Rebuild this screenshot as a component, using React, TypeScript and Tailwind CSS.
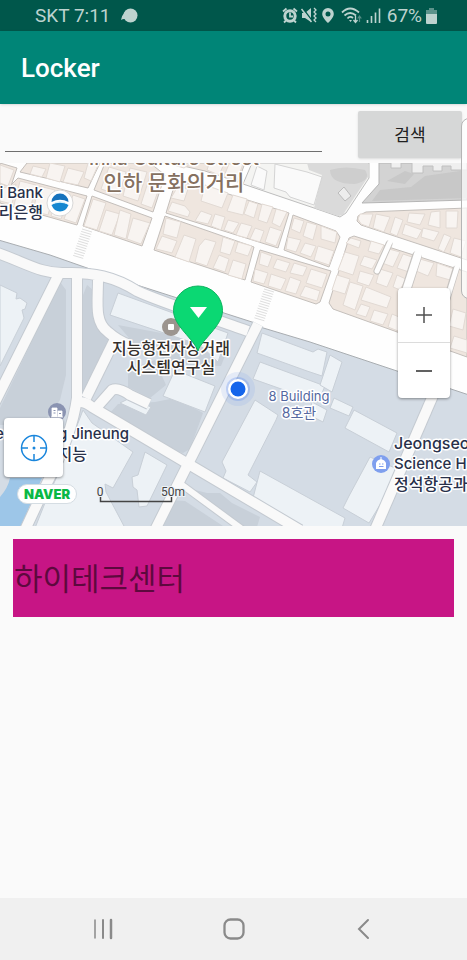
import type { ReactNode } from "react";

type Shape = string;

const cityBlocks: Shape[] = [
  "0,163 17,168 9,192 0,190",
  "27,163 20,172 88,188 100,163",
  "105,163 94,190 153,212 165,175 150,163",
  "18,178 87,196 77,225 0,203 0,184 10,186",
  "92,196 83,226 142,246 152,218",
  "176,180 222,192 289,213 278,248 166,213 173,190",
  "165,216 154,250 245,280 254,247",
  "170,163 245,163 238,182 205,171",
  "293,215 284,250 329,267 340,237 336,231",
  "260,250 251,282 316,304 320,302 331,271",
  "366,212 467,208 467,260 361,225 357,221 358,216",
  "354,236 467,272 467,357 333,309 329,303 349,238",
];

const houses: Shape[] = [
  "0,165 14,170 8,186 0,183",
  "33,166 46,169 42,177 30,174",
  "50,163 65,166 60,182 46,178",
  "68,168 84,172 78,185 63,182",
  "88,163 99,163 91,181 84,178",
  "109,167 126,172 119,195 101,189",
  "130,168 147,172 138,201 123,196",
  "150,176 162,180 152,208 141,204",
  "0,189 16,184 12,204 0,201",
  "20,181 36,185 30,210 14,205",
  "39,186 55,190 48,215 33,211",
  "58,191 70,194 61,219 51,216",
  "73,195 85,199 76,223 64,219",
  "93,199 106,203 97,230 84,226",
  "106,210 120,214 112,235 99,231",
  "120,210 131,214 126,239 114,235",
  "133,218 150,223 141,244 127,239",
  "178,186 188,189 184,201 171,198",
  "172,202 185,206 190,212 188,217 168,211",
  "205,185 228,193 222,208 201,201",
  "233,195 247,199 243,215 227,211",
  "249,201 258,204 254,218 244,214",
  "262,204 273,207 267,223 258,220",
  "276,209 287,212 280,227 272,223",
  "201,211 212,215 208,224 195,221",
  "215,214 225,217 221,230 211,226",
  "228,220 239,223 233,233 224,230",
  "241,223 252,226 247,238 236,235",
  "255,228 264,231 260,242 250,239",
  "270,227 282,231 276,246 265,242",
  "166,218 181,222 177,238 163,234",
  "162,236 177,241 172,253 156,249",
  "184,235 196,239 189,262 175,257",
  "205,239 216,242 207,266 195,262 199,246",
  "223,237 235,241 230,255 220,252",
  "238,242 252,246 248,256 235,252",
  "219,255 229,259 225,272 213,268",
  "233,260 246,264 242,279 228,275",
  "173,164 190,164 184,168 177,166",
  "209,164 224,164 219,175 207,170",
  "229,164 243,164 237,180 224,176",
  "294,218 304,221 300,233 291,229",
  "307,222 317,225 313,240 303,236",
  "321,226 337,232 335,243 321,239",
  "288,237 301,240 296,252 286,249",
  "305,243 316,246 311,257 300,253",
  "318,246 334,251 329,265 314,260",
  "261,252 272,256 268,267 259,264",
  "277,259 290,263 286,272 273,268",
  "294,263 307,267 303,276 290,273",
  "255,269 268,273 264,284 253,281",
  "271,274 286,279 281,290 268,286",
  "290,277 301,281 296,294 285,291",
  "311,269 327,274 322,288 306,283",
  "305,286 320,291 317,301 300,296",
  "360,214 373,214 369,227 361,224 358,219",
  "376,214 390,217 384,232 373,228",
  "395,217 403,220 397,236 390,233",
  "409,213 425,214 420,225 407,222",
  "405,224 422,230 417,239 402,234",
  "423,228 439,232 434,241 421,237",
  "431,212 440,211 440,228 428,225",
  "446,211 458,211 457,228 446,228",
  "444,234 451,237 444,252 438,249",
  "454,238 466,241 461,257 450,253",
  "351,238 361,241 359,248 346,243",
  "345,252 359,256 353,275 338,270",
  "371,241 384,245 379,254 368,251",
  "364,256 377,260 372,269 360,265",
  "389,249 400,252 393,267 382,263",
  "403,254 415,258 409,272 397,268",
  "420,259 434,263 428,276 416,271",
  "437,263 454,269 450,280 436,276",
  "380,269 393,273 387,287 376,283",
  "360,271 374,275 369,286 357,282",
  "397,275 406,279 400,290 393,287",
  "337,275 350,279 345,294 332,290",
  "350,282 363,286 355,310 343,305",
  "366,287 391,297 387,308 361,300",
  "361,304 370,307 366,317 356,314",
  "374,310 388,314 383,325 370,321",
  "392,314 404,319 398,331 388,327",
  "453,309 466,313 463,330 449,326",
  "454,336 467,340 467,353 450,348",
];

const campusRoads: Shape[] = [
  "M-8 251C25 262 40 274 65 273C93 272 115 277 137 291C160 302 220 321 248 331",
  "M59 274L-6 404",
  "M77 278V398Q72 435 47 483L24 532",
  "M98 280C98 302 94 322 108 332Q118 341 130 345",
  "M116 337L86 398",
  "M96 408L112 390Q118 387 130 395L149 404",
  "M80 402Q86 402 92 407L300 530",
  "M258 324L154 532",
  "M438 384L374 532",
];

const grounds: Shape[] = [
  "60,282 66,290 66,375 60,400 42,425 0,425 0,408",
  "87,285 93,290 96,320 109,338 83,392 81,300",
  "118,325 210,342 228,348 221,366 178,365 135,345",
  "128,370 155,360 166,385 150,398 128,387",
  "110,413 118,404 155,402 175,398 203,413 190,449 183,453 172,450",
  "170,500 185,501 226,528 158,528",
  "190,487 195,490 207,493 220,493 232,503 260,517 257,527 242,526",
];

const campusBuildings: Shape[] = [
  "0,285 17,293 16,299 20,298 27,303 25,309 22,310 24,318 0,366",
  "118,293 228,333 218,362 200,345 110,315",
  "175,370 215,386 205,412 163,396",
  "120,403 130,398 151,407 146,415",
  "262,333 313,352 318,349 327,352 322,376 307,371 257,353",
  "260,362 325,386 318,402 253,379",
  "330,355 342,362 332,392 320,385",
  "255,400 278,415 276,420 248,475 257,482 250,492 223,478 226,471 222,462",
  "260,471 345,518 342,528 304,528 253,498",
  "354,410 397,433 389,452 345,428",
  "370,457 395,468 395,480 369,523 343,508 349,496",
  "334,398 353,407 349,416 330,408",
  "312,402 327,410 323,422 309,415",
  "83,410 92,423 133,452 113,488 105,484 106,492 125,528 35,528 47,498 60,470",
  "145,452 167,465 147,506 139,507 137,490 133,487 132,477 138,475",
];

function Polygons({ items, ...rest }: { items: Shape[]; fill: string; stroke: string }) {
  return (
    <g {...rest}>
      {items.map((points) => (
        <polygon key={points} points={points} />
      ))}
    </g>
  );
}

function Crosswalk({ x, y, count }: { x: number; y: number; count: number }) {
  return (
    <g stroke="#dedede" strokeWidth="1">
      {Array.from({ length: count }, (_, i) => (
        <line key={i} x1={x - i * 0.8} y1={y + i * 2.4} x2={x + 10 - i * 0.8} y2={y + 3 + i * 2.4} />
      ))}
    </g>
  );
}

function MapDrawing() {
  return (
    <svg className="absolute inset-0 h-full w-full" viewBox="0 163 467 363" preserveAspectRatio="xMidYMid slice" role="img" aria-label="Map">
      <rect x="-500" y="0" width="1500" height="700" fill="#fefefe" />
      <Polygons items={cityBlocks} fill="#efe6df" stroke="#c4bfbb" />
      <Polygons items={houses} fill="#f8f4f1" stroke="#e2dad4" />

      <path d="M252 163L243 184L314 208L340 217L346 213L369 178V163Z" fill="#f4f4f2" stroke="#bdbdbd" />
      <path d="M322 175L314 208L338 216L343 215L346 210L368 177V163H307L309 170Z" fill="#dadada" />
      <path d="M257 166L267 171L264 190L251 185ZM275 164L307 172L322 177L314 205L290 197L286 192L274 188Z" fill="#fafafa" stroke="#d4d4d4" />
      <path d="M330 170Q345 165 365 170Q372 180 355 184Q330 184 330 170Z" fill="#cecece" />
      <path d="M338 193L344 187L351 196L345 201Z" fill="#ededed" stroke="#bbb" />
      <path d="M379 163V184L362 203L400 202L467 200V163Z" fill="#d3d3d3" stroke="#b5b5b5" />
      <path d="M387 181L405 171L414 174L405 184ZM411 187L425 176L467 170V198L372 201L380 190Z" fill="#c8c8c8" />
      <path d="M391 163V168H401V163M412 163V173H423V166H433V171H442V166H451V170H467V163" fill="#efefef" stroke="#c0c0c0" />

      <g fill="none" stroke="#c6c3c0" strokeLinecap="round">
        <path d="M389 244L377 271" strokeWidth="7" />
        <path d="M417 256L403 300" strokeWidth="10" />
        <path d="M456 269L436 335" strokeWidth="7" />
      </g>
      <g fill="none" stroke="#fefefe" strokeLinecap="round">
        <path d="M390 242L377 271" strokeWidth="5" />
        <path d="M418 254L403 300" strokeWidth="8" />
        <path d="M457 267L436 335" strokeWidth="5" />
      </g>

      <path d="M-5 239L50 255L90 269L140 286L252 322L260 327L310 342L397 371L475 397V540H-5Z" fill="#d4dce5" stroke="#a9adb1" />
      <Polygons items={grounds} fill="#c8d0d9" stroke="none" />
      <Polygons items={campusBuildings} fill="#edf2f6" stroke="#c8cfd7" />
      <path d="M0 497Q8 488 10 478H42L20 528H0Z" fill="#9dc6e8" />
      <g fill="none" stroke="#c4cad1" strokeWidth="12" strokeLinejoin="round">
        {campusRoads.map((d) => (
          <path key={d} d={d} />
        ))}
        <path d="M178 482L246 532" strokeWidth="8" />
      </g>
      <g fill="none" stroke="#f9f9f9" strokeWidth="10" strokeLinejoin="round">
        {campusRoads.map((d) => (
          <path key={d} d={d} />
        ))}
        <path d="M178 482L246 532" strokeWidth="6" />
      </g>
      <Crosswalk x={82} y={229} count={12} />
      <Crosswalk x={264} y={289} count={13} />

      <circle cx="60" cy="203" r="13" fill="#fff" stroke="#d8d8d8" />
      <path d="M51.500 202A8.500 8.500 0 0 1 68.500 202Q60 197.500 51.500 202Z" fill="#1673bd" />
      <path d="M51.500 205Q60 199 68.500 205Q66 211.500 60 211.500T51.500 205Z" fill="#1587d0" />
      <path d="M51.500 204.500Q60 197.500 68.500 204.500Q60 201 51.500 204.500Z" fill="#d6f1fc" />

      <circle cx="171" cy="327" r="9" fill="#9c958f" />
      <rect x="168" y="324" width="6" height="6" rx="1" fill="#fff" />

      <circle cx="57" cy="412" r="9" fill="#8a93b1" />
      <path d="M52 417V408H57V417M58 417V411H62V417M51 417H63" fill="#fff" stroke="#fff" strokeWidth="0.800" />
      <path d="M53.500 410.500H55.500M53.500 413H55.500M59 413.500H61" stroke="#8a93b1" strokeWidth="1" />

      <circle cx="381" cy="464" r="9" fill="#7f9fee" />
      <path d="M376 469V463Q377 460 381 459Q385 460 386 463V469ZM380.500 457H381.500V460H380.500Z" fill="#fff" />
      <path d="M379 464H380.500M382 464H383.500M379 466.500H383.500" stroke="#7f9fee" />

      <g
        fontFamily="Inter, 'Noto Sans CJK KR', sans-serif"
        fontSize="16"
        fontWeight="500"
        fill="#28304a"
        stroke="#fff"
        strokeWidth="3"
        strokeLinejoin="round"
        paintOrder="stroke"
      >
        <g textAnchor="middle" fill="#85705f">
          <text x="174" y="165" fontSize="19">Inha Culture Street</text>
          <text x="174" y="190" fontSize="21">인하 문화의거리</text>
        </g>
        <g textAnchor="end">
          <text x="43" y="198" fontSize="15">i Bank</text>
          <text x="43" y="218">리은행</text>
          <text x="129" y="439" fontSize="15">g Jineung</text>
          <text x="87" y="460">지능</text>
        </g>
        <text x="-5" y="439" fontSize="15">e</text>
        <g textAnchor="middle" fill="#35302c">
          <text x="171" y="354">지능형전자상거래</text>
          <text x="171" y="373">시스템연구실</text>
        </g>
        <g textAnchor="middle" fill="#5468a0" fontWeight="400" fontSize="14">
          <text x="299" y="401" fontSize="13">8 Building</text>
          <text x="299" y="418">8호관</text>
        </g>
        <text x="394" y="449" fontSize="16">Jeongseo</text>
        <text x="394" y="469" fontSize="15">Science H</text>
        <text x="394" y="490">정석항공과</text>
      </g>

      <circle cx="238" cy="389" r="17" fill="#5d8bf0" opacity="0.120" />
      <circle cx="238" cy="389" r="12" fill="#5d8bf0" opacity="0.300" />
      <circle cx="238" cy="389" r="10" fill="#fff" />
      <circle cx="238" cy="389" r="7.500" fill="#1565eb" />

      <path d="M198 351C194 339 173.500 326 173.500 310.500A24.500 24.500 0 0 1 222.500 310.500C222.500 326 202 339 198 351Z" fill="#0bd873" stroke="#0bb45f" />
      <path d="M190 307H207L198.500 318Z" fill="#fff" />

      <g fontFamily="Roboto, sans-serif" fontSize="12" fill="#444" textAnchor="middle" stroke="#edf2f6" strokeWidth="2" paintOrder="stroke">
        <text x="100" y="496">0</text>
        <text x="173" y="496">50m</text>
      </g>
      <path d="M100.500 497V501.500H171.500V497" fill="none" stroke="#444" strokeWidth="1.500" />
    </svg>
  );
}

function StatusIcons() {
  return (
    <svg width="102" height="20" viewBox="280 6 102 20" fill="none" stroke="#bdd3cf" aria-hidden="true">
      <circle cx="289" cy="16" r="5.200" strokeWidth="3" />
      <path d="M289 12.500V16.500H292M282 11.500L285.500 8.500M296 11.500L292.500 8.500M285 20.500L283 22.500M293 20.500L295 22.500" strokeWidth="1.800" />
      <path d="M301 13H304L310 8V22L304 18H301Z" fill="#bdd3cf" stroke="none" />
      <path d="M301.500 8L312 22" stroke="#00574b" strokeWidth="1.500" />
      <path d="M300.500 9L310.500 22" strokeWidth="1.500" />
      <path d="M313 8L315 10L313 12L315 14L313 16L315 18L313 20L315 22" strokeWidth="1.300" />
      <path d="M327 8A5.800 5.800 0 0 0 321.200 14C321.200 18 327 23 327 23S332.800 18 332.800 14A5.800 5.800 0 0 0 327 8ZM327 11.500A2.500 2.500 0 1 1 327 16.500A2.500 2.500 0 1 1 327 11.500Z" fill="#bdd3cf" stroke="none" fillRule="evenodd" />
      <path d="M341 12.500Q349 4.500 358 12.500M343.500 15.500Q349 10.500 355 15.500M346.500 18.500Q349 15.500 352 18" strokeWidth="1.800" />
      <path d="M348 20H351L349.500 22Z" fill="#bdd3cf" stroke="none" />
      <path d="M354.500 16V22M352.500 20L354.500 22.500L356.500 20" strokeWidth="1.300" />
      <path d="M358.500 22V16M356.700 18.500L358.500 16L360.300 18.500" strokeWidth="1.200" opacity="0.450" />
      <path d="M366.500 20V23M370.500 16V23M374.500 12.500V23M378.500 8.500V23" strokeWidth="1.600" />
    </svg>
  );
}

function NavButton({ label, children }: { label: string; children: ReactNode }) {
  return (
    <button type="button" aria-label={label} className="flex h-12 w-12 items-center justify-center">
      <svg width="24" height="24" viewBox="0 0 24 24" fill="none" stroke="#8a8a8a" strokeWidth="2" strokeLinecap="round" aria-hidden="true">
        {children}
      </svg>
    </button>
  );
}

export default function App() {
  return (
    <div className="relative flex min-h-screen flex-col overflow-hidden bg-[#fafafa] font-[Roboto,'Noto_Sans_CJK_KR',sans-serif]">
      <div className="flex h-[31px] items-center bg-[#00574b] pr-[30px] pl-[35px] text-[19px] leading-6 text-[#bdd3cf]">
        <span>SKT 7:11</span>
        <svg className="ml-2.5" width="17" height="16" viewBox="0 0 17 16" fill="#bdd3cf" aria-hidden="true">
          <circle cx="9.500" cy="7.500" r="7" />
          <path d="M4 4Q1 7 0 12Q3 10 6 12Z" />
        </svg>
        <div className="ml-auto flex items-center gap-1">
          <StatusIcons />
          <span>67%</span>
          <svg width="11" height="16" viewBox="0 0 11 16" aria-hidden="true">
            <path d="M3 0H8V2H11V6H0V2H3Z" fill="#5c938b" />
            <path d="M0 6H11V15Q11 16 10 16H1Q0 16 0 15Z" fill="#bdd3cf" />
          </svg>
        </div>
      </div>

      <header className="z-10 flex h-[73px] items-center bg-[#008577] px-[21px] shadow-sm">
        <h1 className="text-[26px] leading-8 font-medium text-white">Locker</h1>
      </header>

      <form className="flex h-[59px] items-start gap-9 pt-[7px] pr-[5px] pl-[5px]" onSubmit={(e) => e.preventDefault()}>
        <input
          type="text"
          aria-label="검색어"
          className="h-[41px] min-w-0 flex-1 border-b border-[#6f6f6f] bg-transparent px-1 text-[20px] outline-none"
        />
        <button type="submit" className="h-[47px] w-[104px] rounded-xs bg-[#d6d7d7] text-[17px] leading-6 text-[#202020] shadow-sm">
          검색
        </button>
      </form>

      <section className="relative h-[363px] overflow-hidden">
        <MapDrawing />
        <div className="absolute top-[125px] right-[17px] flex w-[52px] flex-col divide-y divide-[#dcdcdc] rounded-sm bg-white shadow-[0_1px_3px_rgba(0,0,0,0.4)]">
          <button type="button" aria-label="Zoom in" className="flex h-[55px] items-center justify-center">
            <svg width="16" height="16" viewBox="0 0 16 16" stroke="#505050" strokeWidth="1.500" aria-hidden="true">
              <path d="M0 8H16M8 0V16" />
            </svg>
          </button>
          <button type="button" aria-label="Zoom out" className="flex h-[55px] items-center justify-center">
            <svg width="16" height="16" viewBox="0 0 16 16" stroke="#505050" strokeWidth="1.800" aria-hidden="true">
              <path d="M0 8H16" />
            </svg>
          </button>
        </div>
        <button
          type="button"
          aria-label="My location"
          className="absolute bottom-[49px] left-1 flex h-[59px] w-[59px] items-center justify-center rounded-sm bg-white shadow-[0_1px_3px_rgba(0,0,0,0.4)]"
        >
          <svg width="28" height="28" viewBox="0 0 28 28" fill="none" stroke="#1a86dc" strokeWidth="1.500" aria-hidden="true">
            <circle cx="14" cy="14" r="12.500" />
            <path d="M14 1V8M14 20V27M1 14H8M20 14H27" />
            <circle cx="14" cy="14" r="1.500" fill="#1a86dc" stroke="none" />
          </svg>
        </button>
        <div className="absolute bottom-[22px] left-[17px] flex h-5 w-[60px] items-center justify-center rounded-full border border-[#d5dde3] bg-white font-[Inter] text-[13px] leading-4 font-black text-[#0ab844]">
          NAVER
        </div>
      </section>

      <main className="flex-1 p-[13px]">
        <div className="flex h-[78px] items-center bg-[#c71585] px-px pt-1 text-[31px] leading-10 text-black/55">하이테크센터</div>
      </main>

      <nav className="flex h-[62px] items-center justify-between bg-[#f0f0f0] px-20">
        <NavButton label="Recent apps">
          <path d="M3 3V21" strokeWidth="1.500" />
          <path d="M11 3V21" strokeWidth="2" />
          <path d="M19 3V21" strokeWidth="2.500" />
        </NavButton>
        <NavButton label="Home">
          <rect x="2.500" y="2.500" width="19" height="19" rx="6" strokeWidth="2.300" />
        </NavButton>
        <NavButton label="Back">
          <path d="M17 3L8 12L17 21" />
        </NavButton>
      </nav>

      <div className="absolute top-[118px] -right-2.5 z-20 h-[181px] w-4 rounded-lg border border-[#b5b5b5] bg-white/70" />
    </div>
  );
}
